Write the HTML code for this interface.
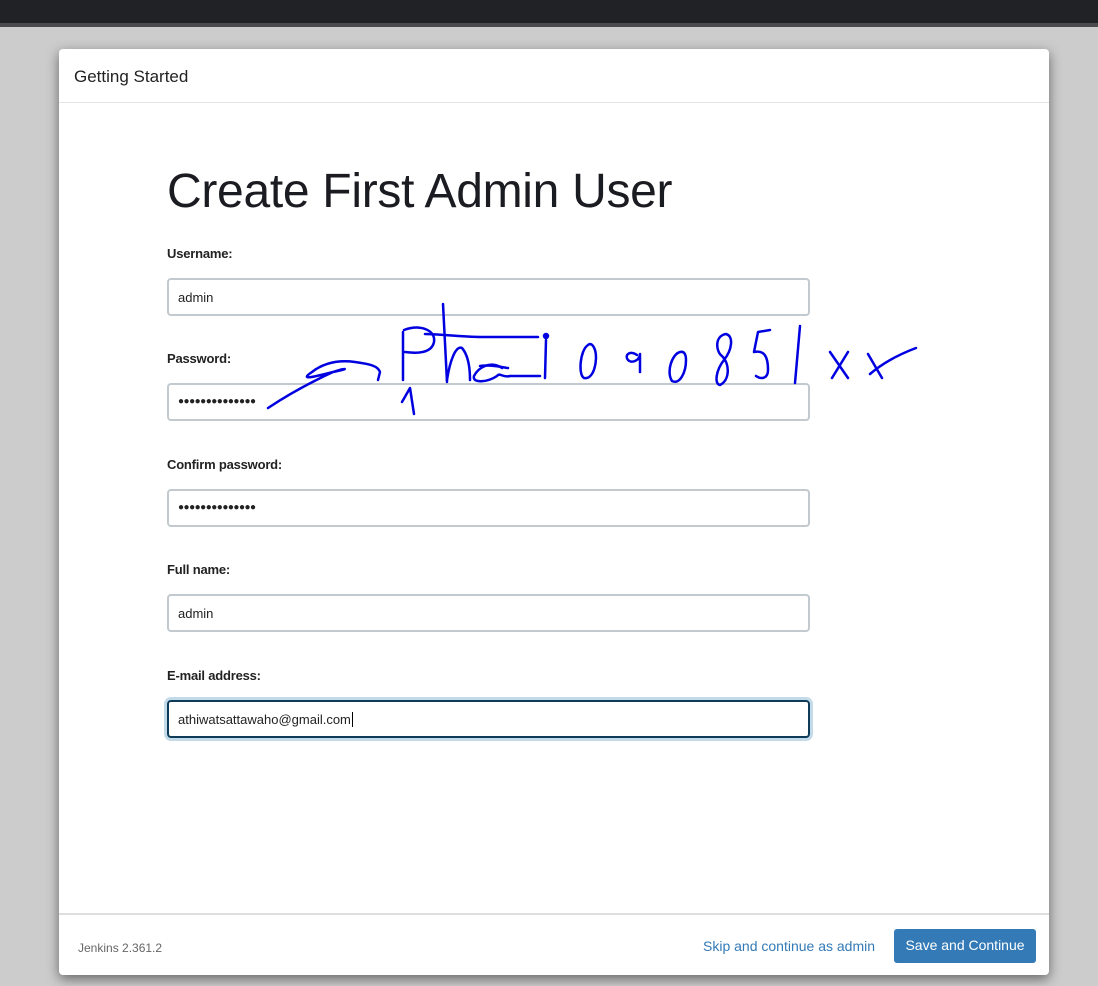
<!DOCTYPE html>
<html><head><meta charset="utf-8"><style>
*{box-sizing:border-box;margin:0;padding:0}
body{width:1098px;height:986px;background:#cccccc;font-family:"Liberation Sans",sans-serif;position:relative;overflow:hidden;color:#1a1a1a}
.top{position:absolute;left:0;top:0;width:1098px;height:23px;background:#212226}
.top2{position:absolute;left:0;top:23px;width:1098px;height:4px;background:#4b4b4d}
.modal{position:absolute;left:59px;top:49px;width:990px;height:926px;background:#fff;border-radius:4px;box-shadow:0 4px 12px rgba(0,0,0,.5)}
.hdr{position:absolute;left:0;top:0;width:100%;height:54px;border-bottom:1px solid #e5e5e5}
.hdr span{position:absolute;left:15px;top:18px;font-size:17px;color:#222}
h1{position:absolute;left:108px;top:115px;font-size:48px;font-weight:normal;letter-spacing:-0.3px;color:#1b1b22;white-space:nowrap}
.lbl{position:absolute;left:108px;font-size:13px;font-weight:bold;color:#222;letter-spacing:-.2px}
.inp{position:absolute;left:108px;width:643px;height:38px;border:2px solid #c3cacf;border-radius:4px;font-size:13px;padding:10px 0 0 9px;color:#222}
.dots{font-size:10px;letter-spacing:-0.5px;padding-top:11px;font-weight:bold}
.focus{border-color:#0e3b57;box-shadow:0 0 0 3px #c3dbe9}
.ftr{position:absolute;left:0;top:864px;width:100%;height:62px;border-top:2px solid #dedede}
.ver{position:absolute;left:19px;top:26px;font-size:12px;color:#666}
.skip{position:absolute;left:644px;top:23px;font-size:14px;color:#337ab7}
.btn{position:absolute;left:835px;top:14px;width:142px;height:34px;background:#337ab7;border-radius:3px;color:#fff;font-size:14px;text-align:center;line-height:33px}
svg{position:absolute;left:0;top:0}
</style></head><body>
<div class="top"></div><div class="top2"></div>
<div class="modal">
<div class="hdr"><span>Getting Started</span></div>
<h1>Create First Admin User</h1>
<div class="lbl" style="top:197px">Username:</div>
<div class="inp" style="top:229px">admin</div>
<div class="lbl" style="top:302px">Password:</div>
<div class="inp dots" style="top:334px">●●●●●●●●●●●●●●</div>
<div class="lbl" style="top:408px">Confirm password:</div>
<div class="inp dots" style="top:440px">●●●●●●●●●●●●●●</div>
<div class="lbl" style="top:513px">Full name:</div>
<div class="inp" style="top:545px">admin</div>
<div class="lbl" style="top:619px">E-mail address:</div>
<div class="inp focus" style="top:651px">athiwatsattawaho@gmail.com<span style="border-left:1px solid #000;margin-left:1px"></span></div>
<div class="ftr"><span class="ver">Jenkins 2.361.2</span><span class="skip">Skip and continue as admin</span><div class="btn">Save and Continue</div></div>
</div>
<svg width="1098" height="986" fill="none" stroke="#0000e0" stroke-width="2.5" stroke-linecap="round" stroke-linejoin="round">
<path d="M268 408 C295 390 320 378 333 372 C345 368 352 368 333 372 C310 378 300 380 312 372 C325 362 340 360 355 362 C370 364 378 366 380 372 L378 380"/>
<path d="M403 332 L403 380"/>
<path d="M404 330 C420 324 436 330 434 342 C432 352 420 354 405 352"/>
<path d="M402 402 L410 388 L414 414"/>
<path d="M443 304 L447 382"/>
<path d="M447 380 C450 360 456 345 462 348 C468 355 470 368 470 380"/>
<path d="M480 366 C492 364 505 368 508 368"/>
<path d="M502 368 C490 360 478 368 474 376 C472 384 488 382 497 376 C500 372 502 378 510 376 L540 376"/>
<path d="M425 334 C440 334 460 337 482 337 L538 337"/>
<circle cx="546" cy="336" r="2" fill="#0000e0"/>
<path d="M546 340 L545 378"/>
<path d="M588 345 C580 350 578 375 584 378 C594 380 598 360 595 350 C593 344 590 343 588 345"/>
<path d="M637 355 C630 350 624 355 628 360 C632 364 640 360 640 354 L640 372"/>
<path d="M680 352 C672 354 666 372 672 381 C680 385 686 372 686 360 C686 354 684 351 680 352"/>
<path d="M726 334 C714 336 716 352 722 356 C730 364 730 380 720 385 C714 384 716 370 724 360 C732 350 734 336 726 334"/>
<path d="M770 330 L758 332 L754 352 C764 350 768 356 768 370 C768 378 762 380 756 376"/>
<path d="M800 326 L795 383"/>
<path d="M830 352 L848 378 M848 352 L832 378"/>
<path d="M868 354 L882 378 M870 374 C884 362 900 354 916 348"/>
</svg>
</body></html>
